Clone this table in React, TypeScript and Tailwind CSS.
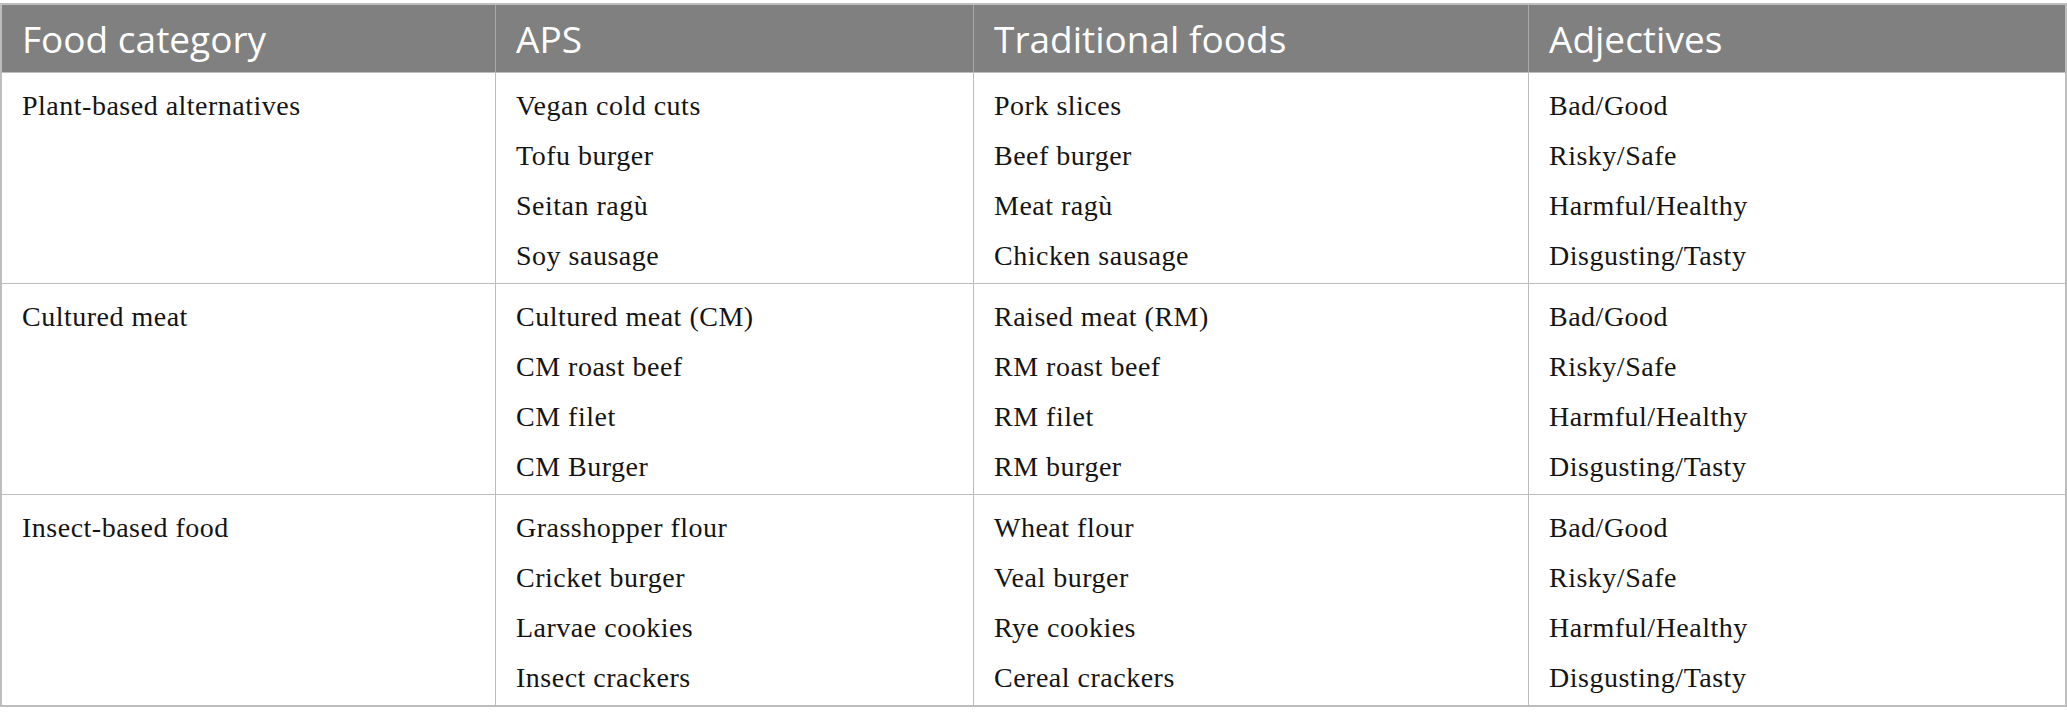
const groups = [
  {
    category: "Plant-based alternatives",
    aps: ["Vegan cold cuts", "Tofu burger", "Seitan ragù", "Soy sausage"],
    traditional: ["Pork slices", "Beef burger", "Meat ragù", "Chicken sausage"],
  },
  {
    category: "Cultured meat",
    aps: ["Cultured meat (CM)", "CM roast beef", "CM filet", "CM Burger"],
    traditional: ["Raised meat (RM)", "RM roast beef", "RM filet", "RM burger"],
  },
  {
    category: "Insect-based food",
    aps: ["Grasshopper flour", "Cricket burger", "Larvae cookies", "Insect crackers"],
    traditional: ["Wheat flour", "Veal burger", "Rye cookies", "Cereal crackers"],
  },
];

const adjectives = ["Bad/Good", "Risky/Safe", "Harmful/Healthy", "Disgusting/Tasty"];

const cols = "grid grid-cols-[493px_478px_555px_1fr]";

function Lines({ items }: { items: string[] }) {
  return (
    <>
      {items.map((t) => (
        <div key={t} className="h-[50px] leading-[50px] whitespace-nowrap">
          {t}
        </div>
      ))}
    </>
  );
}

export default function App() {
  return (
    <div className="w-[2067px] h-[725px] bg-white pt-[3px]">
      <div className="border-2 border-[#bdbdbd]">
        <div
          className={`${cols} h-[67px] bg-[#808080] text-white text-[37px] font-normal font-['Open_Sans',sans-serif]`}
        >
          <div className="flex items-center pl-5">Food category</div>
          <div className="flex items-center pl-5 border-l border-[#a8a8a8]">APS</div>
          <div className="flex items-center pl-5 border-l border-[#a8a8a8]">Traditional foods</div>
          <div className="flex items-center pl-5 border-l border-[#a8a8a8]">Adjectives</div>
        </div>

        {groups.map((g) => (
          <div
            key={g.category}
            className={`${cols} border-t border-[#bdbdbd] text-[28px] tracking-[0.5px] text-[#141414] font-['Liberation_Serif',serif]`}
          >
            <div className="pl-5 pt-2 pb-[2px]">
              <div className="h-[50px] leading-[50px]">{g.category}</div>
            </div>
            <div className="pl-5 pt-2 pb-[2px] border-l border-[#bdbdbd]">
              <Lines items={g.aps} />
            </div>
            <div className="pl-5 pt-2 pb-[2px] border-l border-[#bdbdbd]">
              <Lines items={g.traditional} />
            </div>
            <div className="pl-5 pt-2 pb-[2px] border-l border-[#bdbdbd]">
              <Lines items={adjectives} />
            </div>
          </div>
        ))}
      </div>
    </div>
  );
}
